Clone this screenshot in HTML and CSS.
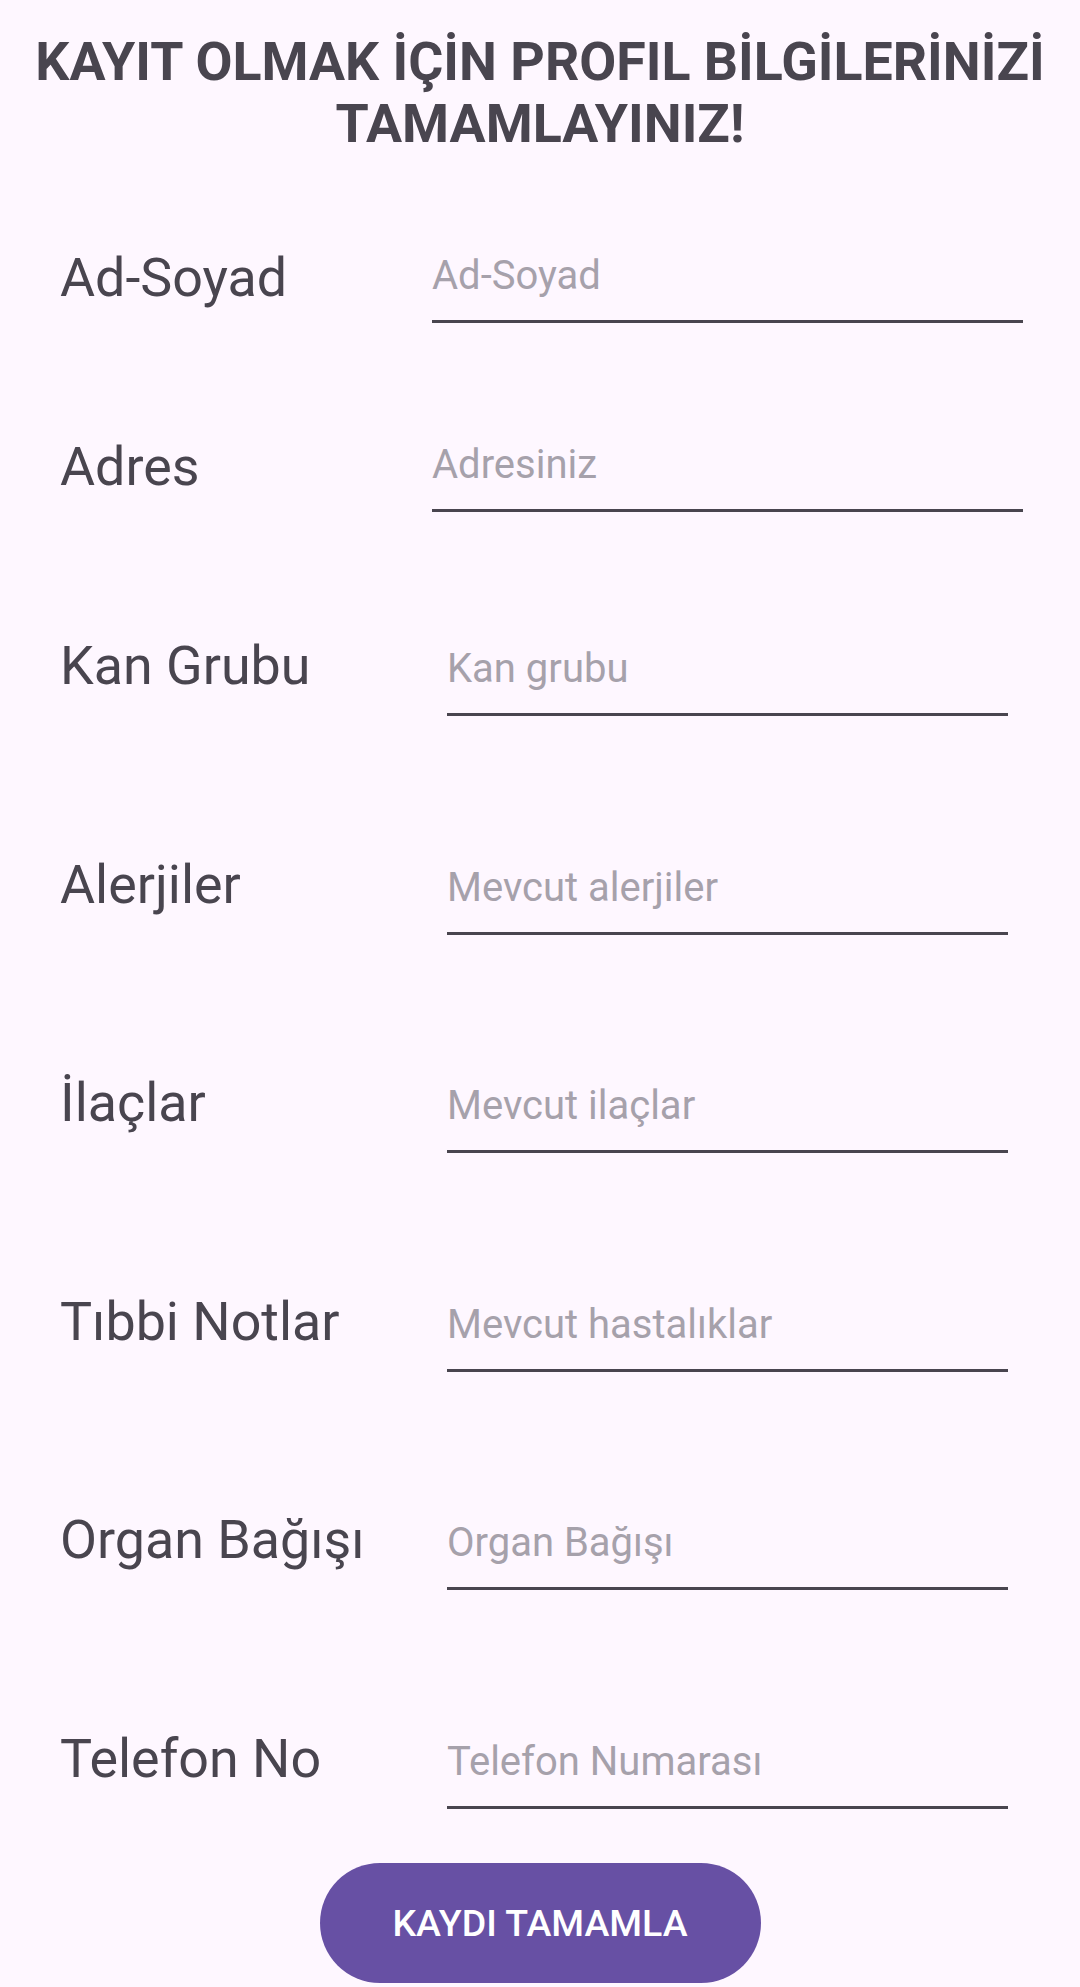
FILE: index.html
```html
<!DOCTYPE html>
<html lang="tr">
<head>
<meta charset="utf-8">
<title>Profil Bilgileri</title>
<link rel="stylesheet" href="styles.css">
</head>
<body>
<main class="screen">
  <h1 class="title">KAYIT OLMAK İÇİN PROFIL BİLGİLERİNİZİ TAMAMLAYINIZ!</h1>
  <form class="form">
    <div class="row row-wide row-h1">
      <span class="label">Ad-Soyad</span>
      <span class="field">Ad-Soyad</span>
    </div>
    <div class="row row-wide row-h2">
      <span class="label">Adres</span>
      <span class="field">Adresiniz</span>
    </div>
    <div class="row row-narrow row-h3">
      <span class="label">Kan Grubu</span>
      <span class="field">Kan grubu</span>
    </div>
    <div class="row row-narrow row-h4">
      <span class="label">Alerjiler</span>
      <span class="field">Mevcut alerjiler</span>
    </div>
    <div class="row row-narrow row-h5">
      <span class="label">İlaçlar</span>
      <span class="field">Mevcut ilaçlar</span>
    </div>
    <div class="row row-narrow row-h4">
      <span class="label">Tıbbi Notlar</span>
      <span class="field">Mevcut hastalıklar</span>
    </div>
    <div class="row row-narrow row-h5">
      <span class="label">Organ Bağışı</span>
      <span class="field">Organ Bağışı</span>
    </div>
    <div class="row row-narrow row-h4">
      <span class="label">Telefon No</span>
      <span class="field">Telefon Numarası</span>
    </div>
    <div class="actions">
      <button type="button" class="submit">KAYDI TAMAMLA</button>
    </div>
  </form>
</main>
</body>
</html>
```
FILE: styles.css
```css
html, body {
  margin: 0;
  padding: 0;
  background: #FEF7FF;
}

body {
  font-family: Roboto, "Liberation Sans", sans-serif;
  color: #49454F;
}

.screen {
  width: 1080px;
  height: 1987px;
  overflow: hidden;
  display: flex;
  flex-direction: column;
}

.title {
  margin: 0;
  padding-top: 31px;
  font-size: 53.7px;
  line-height: 62px;
  font-weight: 700;
  text-align: center;
  color: #49454F;
}

.form {
  display: flex;
  flex-direction: column;
}

.row {
  display: flex;
  align-items: flex-end;
  padding-left: 60px;
  box-sizing: border-box;
}

.row-h1 { height: 168px; }
.row-h2 { height: 189px; }
.row-h3 { height: 204px; }
.row-h4 { height: 219px; }
.row-h5 { height: 218px; }

.label {
  flex: none;
  font-size: 53.8px;
  line-height: 64px;
  color: #49454F;
  white-space: nowrap;
}

.field {
  flex: none;
  font-size: 40px;
  line-height: 48px;
  color: #A6A1AB;
  padding-bottom: 20px;
  border-bottom: 3px solid #49454F;
  white-space: nowrap;
}

.row-wide .label {
  width: 372px;
  margin-bottom: 13px;
}

.row-wide .field {
  width: 591px;
}

.row-narrow .label {
  width: 387px;
  margin-bottom: 18px;
}

.row-narrow .field {
  width: 561px;
}

.actions {
  display: flex;
  justify-content: center;
  margin-top: 54px;
}

.submit {
  width: 441px;
  height: 120px;
  border: none;
  border-radius: 60px;
  background: #6750A4;
  color: #FFFFFF;
  font-family: Roboto, "Liberation Sans", sans-serif;
  font-size: 37.5px;
  font-weight: 500;
  letter-spacing: 0;
  padding: 0;
}
```
